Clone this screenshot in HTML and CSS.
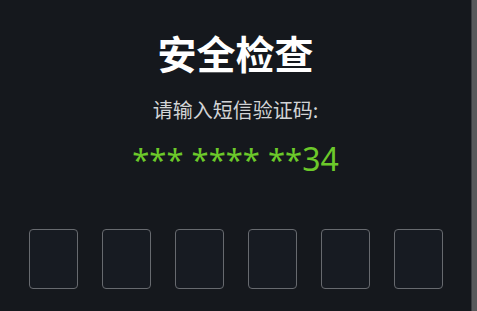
FILE: index.html
```html
<!DOCTYPE html>
<html lang="zh">
<head>
<meta charset="utf-8">
<link rel="stylesheet" href="styles.css">
</head>
<body>
<div class="screen">
  <main class="panel">
    <h1 class="title">安全检查</h1>
    <p class="hint">请输入短信验证码:</p>
    <p class="phone">*** **** **<span class="tail">34</span></p>
    <div class="code">
      <div class="cell"></div>
      <div class="cell"></div>
      <div class="cell"></div>
      <div class="cell"></div>
      <div class="cell"></div>
      <div class="cell"></div>
    </div>
  </main>
  <div class="scrollbar"></div>
</div>
</body>
</html>
```
FILE: styles.css
```css
html, body {
  margin: 0;
  padding: 0;
  background: #15181d;
}
.screen {
  display: flex;
  width: 477px;
  height: 311px;
  overflow: hidden;
}
.panel {
  flex: 1;
  display: flex;
  flex-direction: column;
  align-items: center;
  font-family: "Noto Sans", "Noto Sans CJK SC", sans-serif;
}
.title {
  margin: 25px 0 0;
  font-family: "Noto Sans CJK SC", sans-serif;
  font-size: 39px;
  line-height: 54px;
  font-weight: 700;
  color: #ffffff;
}
.hint {
  margin: 18px 0 0;
  font-family: "Noto Sans CJK SC", sans-serif;
  font-size: 20px;
  line-height: 26px;
  color: #d2d4d6;
}
.phone {
  margin: 16px 0 0;
  font-size: 31px;
  line-height: 40px;
  color: #6cc92a;
}
.tail {
  font-size: 32px;
}
.code {
  display: flex;
  gap: 24px;
  margin-top: 50px;
}
.cell {
  box-sizing: border-box;
  width: 49px;
  height: 60px;
  border: 1.5px solid #676a6f;
  border-radius: 4px;
  background: #171b22;
}
.scrollbar {
  width: 5px;
  border-left: 1px solid #393c40;
  background: #58595b;
}
```
